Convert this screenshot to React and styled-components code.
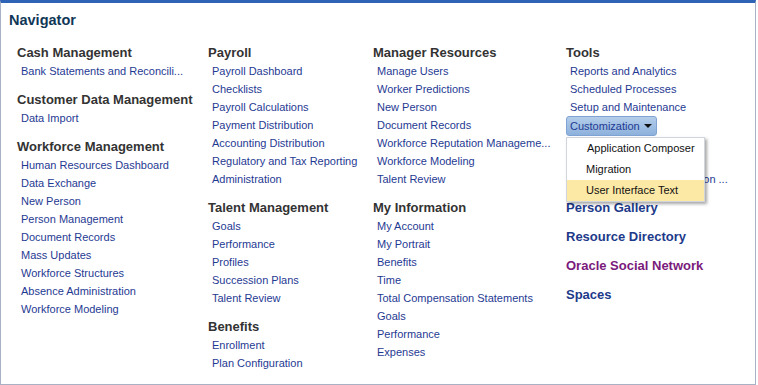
import React from 'react';
import styled, { createGlobalStyle } from 'styled-components';

const GlobalStyle = createGlobalStyle`
  body {
    margin: 0;
    background: #ffffff;
    font-family: 'Liberation Sans', Arial, sans-serif;
  }
`

const Panel = styled.div`
  box-sizing: border-box;
  width: 756px;
  height: 385px;
  background: #fff;
  border-top: 3px solid #2f63b5;
  border-left: 1px solid #a9b2c4;
  border-right: 1px solid #a9b2c4;
  border-bottom: 1px solid #a9b2c4;
  overflow: hidden;
`

const Title = styled.h1`
  margin: 0;
  padding: 7px 0 0 8px;
  font-size: 14.5px;
  line-height: 20px;
  font-weight: bold;
  color: #0f3756;
`

const Columns = styled.div`
  display: grid;
  grid-template-columns: 191px 165px 193px 1fr;
  margin-top: 13px;
  padding-left: 16px;
`

const Column = styled.div`
  display: flex;
  flex-direction: column;
`

const Group = styled.div`
  display: flex;
  flex-direction: column;
  & + & {
    margin-top: 10px;
  }
`

const Heading = styled.div`
  font-size: 13px;
  line-height: 19px;
  font-weight: bold;
  color: ${p => p.$color || '#333333'};
  white-space: nowrap;
`

const Link = styled.a`
  display: block;
  padding-left: 4px;
  font-size: 11px;
  line-height: 18px;
  color: #1f3a93;
  text-decoration: none;
  white-space: nowrap;
`

const MenuRow = styled.div`
  position: relative;
  height: 18px;
`

const MenuButton = styled.div`
  display: inline-flex;
  align-items: center;
  gap: 4px;
  box-sizing: border-box;
  height: 20px;
  margin-top: -1px;
  padding: 0 4px 0 3px;
  border: 1px solid #7fa3d2;
  border-radius: 3px;
  background: linear-gradient(#b4cdea, #8db1dc);
  font-size: 11px;
  color: #1f3a93;
`

const Caret = styled.span`
  width: 0;
  height: 0;
  border-left: 4px solid transparent;
  border-right: 4px solid transparent;
  border-top: 4px solid #111;
`

const Menu = styled.div`
  position: absolute;
  top: 21px;
  left: 0;
  width: 139px;
  box-sizing: border-box;
  background: #fff;
  border: 1px solid #d2d6dc;
  box-shadow: 2px 2px 3px rgba(0, 0, 0, 0.35);
  z-index: 2;
`

const MenuItem = styled.div`
  height: 21px;
  line-height: 21px;
  padding-left: ${p => p.$indent || 20}px;
  font-size: 11px;
  color: #111;
  background: ${p => (p.$active ? '#fde9a6' : 'transparent')};
  white-space: nowrap;
`

const columns = [
  [
    { title: 'Cash Management', links: ['Bank Statements and Reconcili...'] },
    { title: 'Customer Data Management', links: ['Data Import'] },
    {
      title: 'Workforce Management',
      links: [
        'Human Resources Dashboard',
        'Data Exchange',
        'New Person',
        'Person Management',
        'Document Records',
        'Mass Updates',
        'Workforce Structures',
        'Absence Administration',
        'Workforce Modeling',
      ],
    },
  ],
  [
    {
      title: 'Payroll',
      links: [
        'Payroll Dashboard',
        'Checklists',
        'Payroll Calculations',
        'Payment Distribution',
        'Accounting Distribution',
        'Regulatory and Tax Reporting',
        'Administration',
      ],
    },
    {
      title: 'Talent Management',
      links: ['Goals', 'Performance', 'Profiles', 'Succession Plans', 'Talent Review'],
    },
    { title: 'Benefits', links: ['Enrollment', 'Plan Configuration'] },
  ],
  [
    {
      title: 'Manager Resources',
      links: [
        'Manage Users',
        'Worker Predictions',
        'New Person',
        'Document Records',
        'Workforce Reputation Manageme...',
        'Workforce Modeling',
        'Talent Review',
      ],
    },
    {
      title: 'My Information',
      links: [
        'My Account',
        'My Portrait',
        'Benefits',
        'Time',
        'Total Compensation Statements',
        'Goals',
        'Performance',
        'Expenses',
      ],
    },
  ],
]

const extraLinks = [
  { title: 'Person Gallery', color: '#1d3a8a' },
  { title: 'Resource Directory', color: '#1d3a8a' },
  { title: 'Oracle Social Network', color: '#7a1a7c' },
  { title: 'Spaces', color: '#1d3a8a' },
]

export default function App() {
  return (
    <>
      <GlobalStyle />
      <Panel>
        <Title>Navigator</Title>
        <Columns>
          {columns.map((groups, i) => (
            <Column key={i}>
              {groups.map(g => (
                <Group key={g.title}>
                  <Heading>{g.title}</Heading>
                  {g.links.map(l => (
                    <Link key={l}>{l}</Link>
                  ))}
                </Group>
              ))}
            </Column>
          ))}
          <Column>
            <Group>
              <Heading>Tools</Heading>
              <Link>Reports and Analytics</Link>
              <Link>Scheduled Processes</Link>
              <Link>Setup and Maintenance</Link>
              <MenuRow>
                <MenuButton>
                  Customization
                  <Caret />
                </MenuButton>
                <Menu>
                  <MenuItem>Application Composer</MenuItem>
                  <MenuItem $indent={19}>Migration</MenuItem>
                  <MenuItem $indent={19} $active>User Interface Text</MenuItem>
                </Menu>
              </MenuRow>
              <Link>Sandboxes</Link>
              <Link>Marketplace</Link>
              <Link>Social Network Administration ...</Link>
            </Group>
            {extraLinks.map(e => (
              <Group key={e.title}>
                <Heading $color={e.color}>{e.title}</Heading>
              </Group>
            ))}
          </Column>
        </Columns>
      </Panel>
    </>
  )
}
